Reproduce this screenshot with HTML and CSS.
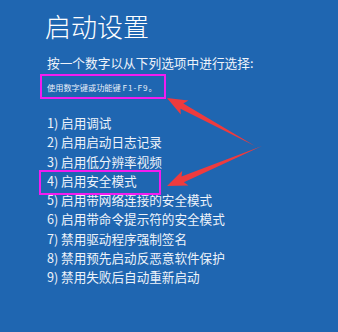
FILE: index.html
```html
<!DOCTYPE html>
<html lang="zh-CN">
<head>
  <meta charset="UTF-8" />
  <meta name="viewport" content="width=device-width, initial-scale=1.0" />
  <title>启动设置</title>
  <link rel="stylesheet" href="styles.css">
</head>
<body>
  <div class="screen">
    <h1>启动设置</h1>
    <p class="prompt">按一个数字以从下列选项中进行选择:</p>
    <div class="hint">使用数字键或功能键 <span class="keys">F1-F9</span>。</div>

    <ol class="options">
      <li>1) 启用调试</li>
      <li>2) 启用启动日志记录</li>
      <li>3) 启用低分辨率视频</li>
      <li class="marked">4) 启用安全模式</li>
      <li>5) 启用带网络连接的安全模式</li>
      <li>6) 启用带命令提示符的安全模式</li>
      <li>7) 禁用驱动程序强制签名</li>
      <li>8) 禁用预先启动反恶意软件保护</li>
      <li>9) 禁用失败后自动重新启动</li>
    </ol>

    <!-- red arrows drawn over the screenshot -->
    <svg class="arrows" width="338" height="332" viewBox="0 0 338 332">
      <polygon points="167,98 188.4,100.6 183.3,103.5 255,146 180.5,108.7 180.8,114.6" />
      <polygon points="167,186 182.3,170.8 181.5,176.6 262,146 183.9,182.2 188.5,185.6" />
    </svg>
  </div>
</body>
</html>
```

FILE: styles.css
```css
body {
  margin: 0;
  background: #1f66b1;
  font-family: "Noto Sans CJK SC", "Noto Sans", sans-serif;
  color: #fff;
}

.screen {
  position: relative;
  height: 332px;
  padding: 10px 0 0 45px;
  box-sizing: border-box;
  overflow: hidden;
}

h1 {
  margin: 0;
  font-size: 26px;
  line-height: 32px;
  font-weight: 300;
}

.prompt {
  margin: 12px 0 0 2px;
  font-size: 12.7px;
  line-height: 18px;
  color: #eef3fa;
}

.hint {
  width: 126px;
  height: 25px;
  margin: 2px 0 0 -5px;
  padding-left: 5px;
  box-sizing: border-box;
  border: 2px solid #f31cf0;
  font-size: 8.2px;
  line-height: 22px;
  white-space: nowrap;
  color: #e8eef8;
}

.hint .keys {
  letter-spacing: 1px;
}

.options {
  list-style: none;
  margin: 14px 0 0 2px;
  padding: 0;
  font-size: 12.6px;
  line-height: 19.3px;
  color: #eef3fa;
}

.options li.marked {
  position: relative;
}

.options li.marked::after {
  content: "";
  position: absolute;
  left: -8px;
  top: -1px;
  width: 122px;
  height: 25px;
  box-sizing: border-box;
  border: 2px solid #f31cf0;
}

.arrows {
  position: absolute;
  top: 0;
  left: 0;
  pointer-events: none;
}

.arrows polygon {
  fill: #ee3b3e;
}
```
